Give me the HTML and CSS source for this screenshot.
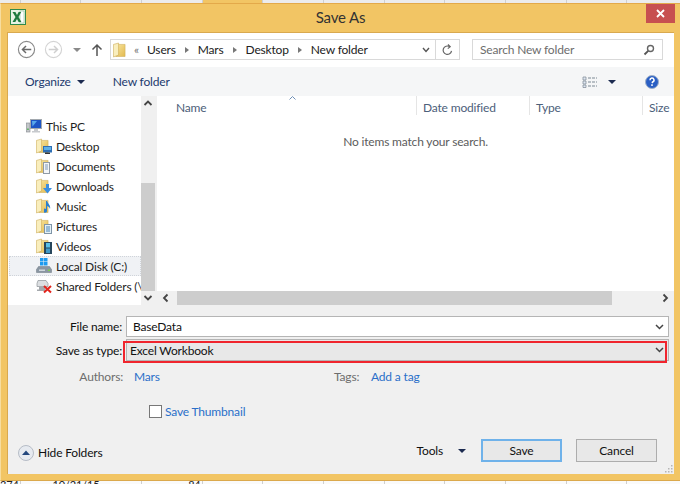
FILE: index.html
```html
<!DOCTYPE html>
<html lang="en">

<head>
    <meta charset="UTF-8">
    <title>Save As</title>
    <link rel="stylesheet" href="styles.css">
</head>

<body>
    <svg class="defs" width="0" height="0">
        <defs>
            <linearGradient id="folderBack" x1="0" y1="0" x2="1" y2="1">
                <stop offset="0" stop-color="#f8e6a0"/>
                <stop offset="1" stop-color="#e3b94e"/>
            </linearGradient>
            <symbol id="folder" viewBox="0 0 14 16">
                <path d="M5 2 H13 V15 H3 Z" fill="url(#folderBack)" stroke="#cfae58" stroke-width=".6"/>
                <path d="M.5 2 L6 .5 V13.500 L.5 15.500 Z" fill="#f9eebd" stroke="#c9a64e" stroke-width=".6"/>
            </symbol>
        </defs>
    </svg>

    <div class="sheet-row sheet-top">
        <span class="first"></span><span></span><span></span><span></span><span class="active"></span><span></span><span></span><span></span><span></span><span></span><span></span><span></span>
    </div>

    <div class="window">
        <div class="titlebar">
            <svg class="app-icon" width="16" height="16" viewBox="0 0 16 16">
                <rect x=".5" y=".5" width="15" height="15" fill="#e8f3e4" stroke="#2f8a4a"/>
                <rect x="10" y="2" width="4" height="12" fill="#fff" stroke="#7fb98c" stroke-width=".6"/>
                <path d="M2.500 3 H5.400 L7 6 L8.600 3 H11.200 L8.500 8 L11.400 13 H8.600 L7 10 L5.300 13 H2.500 L5.500 8 Z" fill="#1e7a3e"/>
            </svg>
            <span class="title">Save As</span>
            <button class="close">
                <svg width="9" height="9" viewBox="0 0 9 9"><path d="M1 1 L8 8 M8 1 L1 8" stroke="#fff" stroke-width="1.800"/></svg>
            </button>
        </div>

        <div class="client">
            <div class="addressbar">
                <div class="nav-buttons">
                    <svg width="19" height="19" viewBox="0 0 20 20"><circle cx="10" cy="10" r="8.500" fill="#fff" stroke="#8a8a8a" stroke-width="1.200"/><path d="M15 10 H6 M9.500 6.200 L5.700 10 L9.500 13.800" fill="none" stroke="#6a6a6a" stroke-width="1.500"/></svg>
                    <svg width="19" height="19" viewBox="0 0 20 20"><circle cx="10" cy="10" r="8.500" fill="#fff" stroke="#d4d4d4" stroke-width="1.200"/><path d="M5 10 H14 M10.500 6.200 L14.300 10 L10.500 13.800" fill="none" stroke="#cfcfcf" stroke-width="1.500"/></svg>
                    <span class="caret grey"></span>
                    <svg class="up" width="12" height="14" viewBox="0 0 12 14"><path d="M6 13 V2 M1.500 6.500 L6 2 L10.500 6.500" fill="none" stroke="#555" stroke-width="1.500"/></svg>
                </div>
                <div class="crumbs">
                    <svg class="crumb-folder" width="13" height="16"><use href="#folder"/></svg>
                    <span class="chev-left">&laquo;</span>
                    <span>Users</span><span class="sep"></span>
                    <span>Mars</span><span class="sep"></span>
                    <span>Desktop</span><span class="sep"></span>
                    <span>New folder</span>
                    <svg class="crumb-down" width="8" height="6" viewBox="0 0 8 6"><path d="M1 1 L4 4.500 L7 1" fill="none" stroke="#555" stroke-width="1.400"/></svg>
                    <span class="refresh">
                        <svg width="11" height="12" viewBox="0 0 11 12"><path d="M9.500 6.800 A4.200 4.200 0 1 1 7.500 2.600 M6 .5 L8.200 2.700 L5.800 4.600" fill="none" stroke="#666" stroke-width="1.200"/></svg>
                    </span>
                </div>
                <div class="search">
                    <span>Search New folder</span>
                    <svg width="12" height="12" viewBox="0 0 12 12"><circle cx="7.500" cy="4.500" r="3" fill="none" stroke="#666" stroke-width="1.400"/><path d="M5.200 6.800 L1.500 10.500" stroke="#555" stroke-width="1.800"/></svg>
                </div>
            </div>

            <div class="toolbar">
                <span class="tool">Organize</span>
                <span class="caret dark organize-caret"></span>
                <span class="tool new-folder">New folder</span>
                <svg class="view-icon" width="16" height="12" viewBox="0 0 16 12">
                    <path d="M1 1 h3 v3 h-3 z M1 5 h3 v3 h-3 z M1 9 h3 v2.500 h-3 z" fill="#dfe7f2" stroke="#7d8794" stroke-width=".7"/>
                    <path d="M6 2 h9 M6 6 h9 M6 10 h9" stroke="#7d8794" stroke-width="1.200" stroke-dasharray="3 1"/>
                </svg>
                <span class="caret dark view-caret"></span>
                <svg class="help" width="14" height="14" viewBox="0 0 14 14">
                    <circle cx="7" cy="7" r="6.500" fill="#2a5fc4" stroke="#9fb0c8"/>
                    <path d="M5 5.200 A2 2 0 1 1 7.600 7 L7 8" fill="none" stroke="#fff" stroke-width="1.500"/>
                    <rect x="6.200" y="9.300" width="1.600" height="1.600" fill="#fff"/>
                </svg>
            </div>

            <div class="browser">
                <div class="nav-pane">
                    <ul class="tree">
                        <li class="root">
                            <svg width="16" height="14" viewBox="0 0 16 14">
                                <rect x=".5" y="4" width="3.500" height="9" fill="#c4c7ca" stroke="#83888d" stroke-width=".6"/>
                                <rect x="1.200" y="9.500" width="1.500" height="1.500" fill="#4fb04f"/>
                                <rect x="4.500" y=".5" width="11" height="9" fill="#1d55c4" stroke="#a2a8ae"/>
                                <path d="M6 2 L11 2 L6.500 7.500 Z" fill="#58a8ec"/>
                                <path d="M8 10 h4 v2 h2 v1.500 h-8 v-1.500 h2 z" fill="#c7cace"/>
                            </svg>
                            This PC
                        </li>
                        <li>
                            <span class="tree-icon"><svg width="13" height="16"><use href="#folder"/></svg>
                                <svg class="overlay" width="9" height="8" viewBox="0 0 9 8"><rect width="9" height="6.500" fill="#2f6fb4"/><rect x="1" y="1" width="7" height="3" fill="#5fb0e6"/><rect x="2" y="6.500" width="5" height="1.500" fill="#30343a"/></svg>
                            </span>
                            Desktop
                        </li>
                        <li>
                            <span class="tree-icon"><svg width="13" height="16"><use href="#folder"/></svg>
                                <svg class="overlay docs" width="7" height="12" viewBox="0 0 7 12"><rect x=".5" y=".5" width="6" height="11" fill="#f4f6f8" stroke="#8f9aa6"/><path d="M2 3 h3 M2 5 h3 M2 7 h3" stroke="#7f99b8"/></svg>
                            </span>
                            Documents
                        </li>
                        <li>
                            <span class="tree-icon"><svg width="13" height="16"><use href="#folder"/></svg>
                                <svg class="overlay" width="9" height="10" viewBox="0 0 9 10"><path d="M3 0 H6 V4 H9 L4.500 9.500 L0 4 H3 Z" fill="#3b8fe0"/></svg>
                            </span>
                            Downloads
                        </li>
                        <li>
                            <span class="tree-icon"><svg width="13" height="16"><use href="#folder"/></svg>
                                <svg class="overlay" width="8" height="13" viewBox="0 0 8 13"><path d="M3 0 V9.500 A2 2 0 1 1 2 8 V0 Z M3 0 C4 3 7 4 6 8 C5.500 6 4.500 5.500 3 5 Z" fill="#2a7fd0"/></svg>
                            </span>
                            Music
                        </li>
                        <li>
                            <span class="tree-icon"><svg width="13" height="16"><use href="#folder"/></svg>
                                <svg class="overlay" width="8" height="10" viewBox="0 0 8 10"><rect x=".5" y=".5" width="7" height="9" fill="#e4f0f6" stroke="#7f95a8"/><path d="M2 3 h4 M2 5 h4 M2 7 h4" stroke="#4a86b8"/></svg>
                            </span>
                            Pictures
                        </li>
                        <li>
                            <span class="tree-icon"><svg width="13" height="16"><use href="#folder"/></svg>
                                <svg class="overlay" width="8" height="12" viewBox="0 0 8 12"><rect width="8" height="12" fill="#27465c"/><rect x="2" y="1" width="4" height="4.500" fill="#58c0e8"/><rect x="2" y="6.500" width="4" height="4.500" fill="#3f9ac8"/></svg>
                            </span>
                            Videos
                        </li>
                        <li class="selected">
                            <svg width="16" height="16" viewBox="0 0 16 16">
                                <path d="M4 0 h3.500 v3.500 h-3.500 z M8 0 h3.500 v3.500 h-3.500 z M4 4 h3.500 v3.500 h-3.500 z M8 4 h3.500 v3.500 h-3.500 z" fill="#1d9bf0"/>
                                <path d="M2.500 8.500 h11 l2 3 v3 h-15 v-3 z" fill="#8a96a2" stroke="#6b7680" stroke-width=".5"/>
                                <rect x="3" y="11.500" width="6" height="1.500" fill="#d0d7dd"/>
                                <rect x="12" y="11.500" width="2" height="1.500" fill="#7fd04a"/>
                            </svg>
                            Local Disk (C:)
                        </li>
                        <li>
                            <svg width="16" height="16" viewBox="0 0 16 16">
                                <path d="M2 2.500 h8 l2 3 v3 h-11 v-3 z" fill="#dcdfe2" stroke="#8d9296" stroke-width=".7"/>
                                <path d="M3 8.500 h6 v3 h-6 z M1 11.500 h9 v1.500 h-9 z" fill="#a5a9ad"/>
                                <path d="M8 8 L15 14.500 M15 8 L8 14.500" stroke="#e2241c" stroke-width="2"/>
                            </svg>
                            Shared Folders (\\
                        </li>
                    </ul>
                    <div class="vscroll">
                        <svg class="arrow" width="14" height="14" viewBox="0 0 14 14"><path d="M3.500 9 L7 5.500 L10.500 9" fill="none" stroke="#444" stroke-width="1.800"/></svg>
                        <div class="vtrack"><div class="vthumb"></div></div>
                        <svg class="arrow" width="14" height="14" viewBox="0 0 14 14"><path d="M3.500 5 L7 8.500 L10.500 5" fill="none" stroke="#444" stroke-width="1.800"/></svg>
                    </div>
                </div>

                <div class="list-pane">
                    <div class="columns">
                        <span class="col col-name">Name</span>
                        <span class="col col-date">Date modified</span>
                        <span class="col col-type">Type</span>
                        <span class="col col-size">Size</span>
                        <svg class="sort" width="7" height="4" viewBox="0 0 7 4"><path d="M.5 3.500 L3.500 .5 L6.500 3.500" fill="none" stroke="#6f8fb5"/></svg>
                    </div>
                    <p class="empty">No items match your search.</p>
                    <div class="hscroll">
                        <svg class="arrow" width="17" height="14" viewBox="0 0 17 14"><path d="M10.500 3.500 L7 7 L10.500 10.500" fill="none" stroke="#444" stroke-width="1.800"/></svg>
                        <div class="htrack"><div class="hthumb"></div></div>
                        <svg class="arrow" width="17" height="14" viewBox="0 0 17 14"><path d="M6.500 3.500 L10 7 L6.500 10.500" fill="none" stroke="#444" stroke-width="1.800"/></svg>
                    </div>
                </div>
            </div>

            <div class="details">
                <div class="field">
                    <label>File name:</label>
                    <div class="combo white">BaseData<svg width="9" height="6" viewBox="0 0 9 6"><path d="M1 1 L4.500 4.500 L8 1" fill="none" stroke="#444" stroke-width="1.500"/></svg></div>
                </div>
                <div class="field type-field">
                    <label>Save as type:</label>
                    <div class="combo grey-combo">Excel Workbook<svg width="9" height="6" viewBox="0 0 9 6"><path d="M1 1 L4.500 4.500 L8 1" fill="none" stroke="#444" stroke-width="1.500"/></svg></div>
                    <div class="highlight"></div>
                </div>
                <div class="meta">
                    <span class="authors">Authors:</span>
                    <span class="author-value"><a class="link">Mars</a></span>
                    <span class="tags">Tags:</span>
                    <a class="link">Add a tag</a>
                </div>
                <div class="thumb-row">
                    <span class="checkbox"></span><a class="link">Save Thumbnail</a>
                </div>
                <div class="actions">
                    <div class="hide-group">
                        <svg width="16" height="16" viewBox="0 0 16 16"><circle cx="8" cy="8" r="7.500" fill="#e6eaf0" stroke="#b6bcc6"/><path d="M4 10 L8 5.500 L12 10 Z" fill="#23477e"/></svg>
                        <span>Hide Folders</span>
                    </div>
                    <span class="tools">Tools</span>
                    <span class="caret dark tools-caret"></span>
                    <button class="btn default">Save</button>
                    <button class="btn">Cancel</button>
                </div>
                <svg class="grip" width="8" height="8" viewBox="0 0 8 8"><path d="M6 0 h1.500 v1.500 h-1.500 z M3 3 h1.500 v1.500 h-1.500 z M6 3 h1.500 v1.500 h-1.500 z M0 6 h1.500 v1.500 h-1.500 z M3 6 h1.500 v1.500 h-1.500 z M6 6 h1.500 v1.500 h-1.500 z" fill="#b5b5b5"/></svg>
            </div>
        </div>
    </div>

    <div class="sheet-row sheet-bottom">
        <span class="first">374</span><span class="date">10/21/15</span><span class="num">84</span><span></span><span></span><span></span><span></span><span></span><span></span><span></span><span></span>
    </div>
</body>

</html>
```

FILE: styles.css
```css
/* General Styles */
html, body {
    margin: 0;
    padding: 0;
}

body {
    width: 680px;
    height: 484px;
    overflow: hidden;
    background-color: #fff;
    color: #1e1e1e;
    font-family: Lato, "Noto Sans", sans-serif;
    font-size: 12px;
    letter-spacing: -0.17px;
    display: flex;
    flex-direction: column;
}

.defs {
    position: absolute;
}

/* Spreadsheet peeking out behind the dialog */
.sheet-row {
    display: flex;
    flex: none;
    height: 3px;
    overflow: hidden;
    background-color: #fafafa;
}

.sheet-row span {
    width: 60.700px;
    flex: none;
    box-sizing: border-box;
    border-right: 1px solid #cfcfcf;
}

.sheet-row .first {
    width: 20.500px;
}

.sheet-top {
    background-color: #ececec;
}

.sheet-top .active {
    background-color: #f2c564;
}

.sheet-bottom span {
    font-size: 11px;
    line-height: 7px;
    color: #222;
}

.sheet-bottom .date {
    width: 121.400px;
    padding-left: 32px;
}

.sheet-bottom .num {
    text-align: right;
    padding-right: 1px;
}

/* Window frame */
.window {
    flex: none;
    height: 478px;
    background-color: #f2c564;
    border-top: 1px solid #e3a94a;
    border-left: 1px solid #f7dd9f;
    border-bottom: 1px solid #dba94c;
    box-sizing: border-box;
    padding: 0 6px 6px 6px;
    display: flex;
    flex-direction: column;
}

.titlebar {
    height: 28px;
    flex: none;
    display: flex;
    align-items: center;
    justify-content: center;
    position: relative;
}

.app-icon {
    position: absolute;
    left: 3px;
    top: 5px;
}

.title {
    font-size: 15px;
    color: #333;
    margin-bottom: 2px;
}

.close {
    position: absolute;
    right: -1px;
    top: 0;
    width: 29px;
    height: 19px;
    border: none;
    padding: 0;
    background-color: #c75050;
    display: flex;
    align-items: center;
    justify-content: center;
}

.client {
    flex: 1;
    background-color: #f0f0f0;
    border: 1px solid #d9a94f;
    border-width: 1px 0 0 1px;
    display: flex;
    flex-direction: column;
    min-height: 0;
}

/* Address row */
.addressbar {
    height: 34px;
    flex: none;
    background-color: #fff;
    display: flex;
    align-items: center;
    box-sizing: border-box;
    padding: 0 0 1px 9px;
}

.nav-buttons {
    display: flex;
    align-items: center;
    width: 93px;
    flex: none;
}

.nav-buttons svg + svg {
    margin-left: 8px;
}

.caret {
    display: inline-block;
    width: 0;
    height: 0;
    border-left: 4px solid transparent;
    border-right: 4px solid transparent;
    border-top: 4px solid #1c2b50;
}

.caret.grey {
    border-top-color: #8a8a8a;
    margin-left: 10px;
}

.nav-buttons .up {
    margin-left: 10px;
}

.crumbs {
    width: 350px;
    height: 21px;
    flex: none;
    box-sizing: border-box;
    border: 1px solid #d9d9d9;
    display: flex;
    align-items: center;
    padding-left: 2px;
    gap: 8px;
    position: relative;
    color: #222;
}

.chev-left {
    color: #777;
}

.sep {
    width: 0;
    height: 0;
    border-top: 3px solid transparent;
    border-bottom: 3px solid transparent;
    border-left: 4px solid #777;
    margin: 0 1px;
}

.crumb-down {
    position: absolute;
    right: 29px;
    top: 7px;
}

.refresh {
    position: absolute;
    right: 0;
    top: 0;
    bottom: 0;
    width: 23px;
    border-left: 1px solid #d9d9d9;
    display: flex;
    align-items: center;
    justify-content: center;
}

.search {
    width: 191px;
    height: 21px;
    flex: none;
    margin-left: 12px;
    box-sizing: border-box;
    border: 1px solid #d9d9d9;
    display: flex;
    align-items: center;
    justify-content: space-between;
    padding: 0 7px 0 7px;
    color: #6d6d6d;
}

/* Command bar */
.toolbar {
    height: 29px;
    flex: none;
    background-color: #f5f6f7;
    display: flex;
    align-items: center;
    padding: 0 15px 0 17px;
    color: #1c3a6e;
}

.organize-caret {
    margin-left: 6px;
}

.new-folder {
    margin-left: 28px;
    margin-right: auto;
}

.view-caret {
    margin-left: 10px;
}

.help {
    margin-left: 29px;
}

/* Browser area */
.browser {
    height: 209px;
    flex: none;
    background-color: #fff;
    display: flex;
}

.nav-pane {
    width: 149px;
    flex: none;
    display: flex;
}

.tree {
    list-style-type: none;
    margin: 0;
    padding: 20px 0 0;
    width: 133px;
    box-sizing: border-box;
    overflow: hidden;
}

.tree li {
    height: 20px;
    display: flex;
    align-items: center;
    gap: 4px;
    padding-left: 28px;
    white-space: nowrap;
    box-sizing: border-box;
}

.tree li svg {
    flex: none;
}

.tree li.root {
    padding-left: 18px;
}

.tree li.selected {
    margin-left: 1px;
    padding-left: 26px;
    background-color: #f0f2f5;
    border: 1px dotted #d0d4da;
}

.tree-icon {
    width: 14px;
    height: 16px;
    margin-right: 2px;
    position: relative;
    flex: none;
}

.overlay {
    position: absolute;
    right: -2px;
    bottom: 0;
}

.overlay.docs {
    right: 0;
}

.vscroll {
    width: 16px;
    flex: none;
    background-color: #f0f0f0;
    display: flex;
    flex-direction: column;
}

.vtrack {
    flex: 1;
    padding-top: 73px;
    display: flex;
}

.vthumb {
    flex: 1;
    margin-right: 2px;
    background-color: #cdcdcd;
}

.arrow {
    flex: none;
    display: block;
}

.list-pane {
    flex: 1;
    min-width: 0;
    display: flex;
    flex-direction: column;
}

.columns {
    height: 19px;
    flex: none;
    display: grid;
    grid-template-columns: 260px 113px 113px 1fr;
    color: #4c607a;
    position: relative;
    line-height: 24px;
}

.col {
    border-right: 1px solid #e5e5e5;
    padding-left: 6px;
    overflow: hidden;
    white-space: nowrap;
}

.col-name {
    padding-left: 19px;
}

.col-size {
    border-right: none;
}

.sort {
    position: absolute;
    left: 132px;
    top: 0;
}

.empty {
    flex: 1;
    margin: 0;
    padding-top: 19px;
    text-align: center;
    color: #5c5c5c;
}

.hscroll {
    height: 14px;
    flex: none;
    background-color: #f0f0f0;
    display: flex;
}

.htrack {
    flex: 1;
    display: flex;
    padding: 0 45px 0 3px;
}

.hthumb {
    flex: 1;
    background-color: #cdcdcd;
}

/* Bottom part */
.details {
    flex: 1;
    position: relative;
    padding-top: 11px;
    background-color: #f0f0f0;
}

.field {
    display: flex;
    align-items: center;
    height: 21px;
    margin-bottom: 2px;
    position: relative;
}

.type-field {
    height: 22px;
}

.field label {
    width: 118px;
    text-align: right;
    padding-right: 4px;
    box-sizing: border-box;
    flex: none;
    color: #111;
}

.combo {
    width: 543px;
    height: 100%;
    box-sizing: border-box;
    border: 1px solid #b5b5b5;
    padding: 0 4px 0 6px;
    display: flex;
    align-items: center;
    justify-content: space-between;
    color: #111;
}

.combo.white {
    background-color: #fff;
}

.combo.grey-combo {
    background-color: #e8e8e8;
    padding-left: 3px;
}

.highlight {
    position: absolute;
    left: 115px;
    top: 2px;
    width: 544px;
    height: 22px;
    box-sizing: border-box;
    border: 2px solid #f0252e;
}

.meta {
    display: flex;
    align-items: center;
    margin-top: 6px;
    height: 18px;
    color: #6d6d6d;
}

.authors {
    width: 115px;
    text-align: right;
    margin-right: 11px;
    flex: none;
}

.author-value {
    width: 200px;
    flex: none;
}

.tags {
    width: 37px;
    flex: none;
}

.link {
    color: #2a6fc9;
}

.thumb-row {
    display: flex;
    align-items: center;
    margin-top: 17px;
    margin-left: 141px;
    gap: 3px;
    height: 18px;
}

.checkbox {
    width: 13px;
    height: 13px;
    box-sizing: border-box;
    background-color: #fff;
    border: 1px solid #777;
}

.actions {
    display: flex;
    align-items: center;
    position: absolute;
    left: 10px;
    right: 17px;
    bottom: 12px;
    height: 23px;
}

.hide-group {
    display: flex;
    align-items: center;
    gap: 4px;
    margin-top: 4px;
    margin-right: auto;
    color: #111;
}

.tools {
    color: #111;
}

.tools-caret {
    margin-left: 15px;
}

.btn {
    width: 81px;
    height: 23px;
    box-sizing: border-box;
    border: 1px solid #adadad;
    background-color: #e8e8e8;
    font-family: inherit;
    font-size: inherit;
    letter-spacing: inherit;
    color: #111;
    padding: 0;
    margin-left: 14px;
}

.btn.default {
    border: 2px solid #6fb2ea;
    margin-left: 15px;
}

.grip {
    position: absolute;
    right: 1px;
    bottom: 1px;
}
```
